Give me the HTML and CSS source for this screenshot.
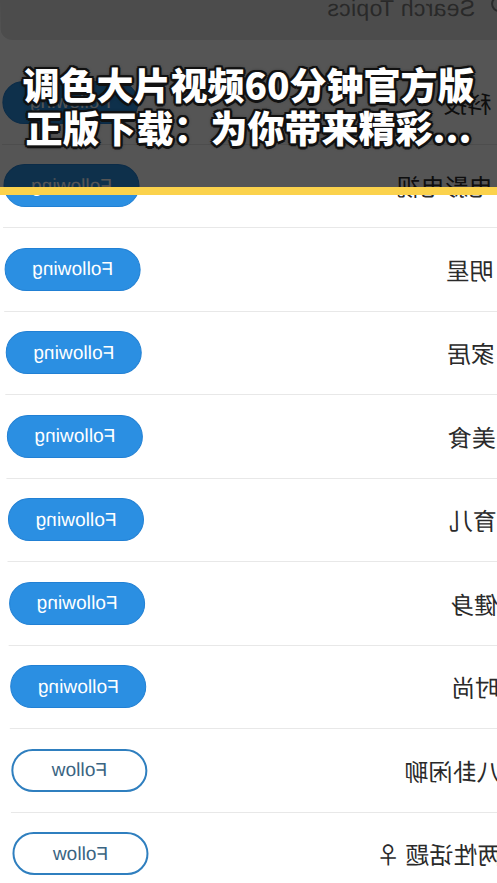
FILE: index.html
```html
<!DOCTYPE html>
<html lang="zh">
<head>
<meta charset="utf-8">
<title>Topics</title>
<link rel="stylesheet" href="styles.css">
</head>
<body>
<div class="screen">
  <div class="search-wrap">
    <div class="search-bar">
      <svg class="search-icon" width="22" height="22" viewBox="0 0 22 22"><circle cx="10" cy="10" r="7" fill="none" stroke="#808080" stroke-width="2"/><line x1="5" y1="5" x2="0" y2="0" stroke="#808080" stroke-width="2"/></svg>
      <span class="search-text">Search Topics</span>
    </div>
  </div>
  <ul class="topics">
    <li class="topic"><span class="name">科技</span><span class="btn following">Following</span></li>
    <li class="topic"><span class="name">电影电视</span><span class="btn following">Following</span></li>
    <li class="topic"><span class="name">明星</span><span class="btn following">Following</span></li>
    <li class="topic"><span class="name">家居</span><span class="btn following">Following</span></li>
    <li class="topic"><span class="name">美食</span><span class="btn following">Following</span></li>
    <li class="topic"><span class="name">育儿</span><span class="btn following">Following</span></li>
    <li class="topic"><span class="name">健身</span><span class="btn following">Following</span></li>
    <li class="topic"><span class="name">时尚</span><span class="btn following">Following</span></li>
    <li class="topic"><span class="name">八卦闲聊</span><span class="btn follow">Follow</span></li>
    <li class="topic"><span class="name">两性话题 ♀</span><span class="btn follow">Follow</span></li>
  </ul>
</div>
<div class="overlay">
  <h1 class="title">调色大片视频60分钟官方版<br>正版下载：为你带来精彩...</h1>
</div>
<div class="stripe"></div>
</body>
</html>
```
FILE: styles.css
```css
html, body {
  margin: 0;
  padding: 0;
  background: #fff;
  width: 497px;
  height: 883px;
  overflow: hidden;
}
body {
  position: relative;
  font-family: "Liberation Sans", Arial, sans-serif;
}
.screen {
  width: 497px;
  transform-origin: 50% 0;
  transform: skewX(0.77deg) scaleX(-1);
}
.search-wrap {
  height: 61px;
  overflow: hidden;
}
.search-bar {
  height: 40px;
  margin-left: -12px;
  background: #e4e4e4;
  border-radius: 0 0 12px 12px;
  display: flex;
  align-items: flex-start;
  gap: 12px;
  padding-left: 0;
}
.search-icon {
  margin-top: -6px;
  flex: none;
}
.search-text {
  font-size: 23px;
  line-height: 26px;
  letter-spacing: 0.3px;
  color: #7c7c7c;
  margin-top: -5px;
}
.topics {
  list-style: none;
  margin: 0;
  padding: 0;
}
.topic {
  height: 83.5px;
  box-sizing: border-box;
  border-bottom: 1px solid #e8e8e8;
  display: flex;
  align-items: center;
  justify-content: space-between;
  padding: 0 1px 0 7px;
}
.name {
  font-family: "Noto Sans CJK SC", sans-serif;
  font-size: 24px;
  color: #2a2a2a;
  white-space: nowrap;
}
.btn {
  width: 136px;
  height: 43px;
  box-sizing: border-box;
  border-radius: 22px;
  display: flex;
  align-items: center;
  justify-content: center;
  font-size: 19px;
  letter-spacing: 0.1px;
  flex: none;
}
.following {
  background: #2b8fe2;
  border: 1px solid #2180d4;
  color: #fff;
}
.follow {
  background: #fff;
  border: 2px solid #2f7fbf;
  color: #3a6482;
}
.overlay {
  position: absolute;
  top: 0;
  left: 0;
  width: 497px;
  height: 187px;
  background: rgba(0, 0, 0, 0.667);
  box-sizing: border-box;
  padding-top: 63px;
}
.title {
  margin: 0;
  text-align: center;
  font-family: "Noto Sans CJK SC", sans-serif;
  font-weight: 900;
  font-size: 37px;
  line-height: 43px;
  color: #fff;
  text-shadow:
    2.5px 0 0 #111, -2.5px 0 0 #111, 0 2.5px 0 #111, 0 -2.5px 0 #111,
    1.8px 1.8px 0 #111, -1.8px 1.8px 0 #111, 1.8px -1.8px 0 #111, -1.8px -1.8px 0 #111,
    0 0 4px #000;
}
.stripe {
  position: absolute;
  top: 187px;
  left: 0;
  width: 497px;
  height: 8px;
  background: #fbd24c;
}
```
